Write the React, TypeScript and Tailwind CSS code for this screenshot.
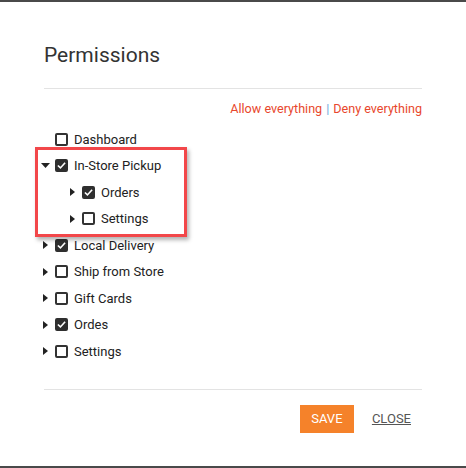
import React from "react";

type Node = { label: string; checked: boolean; arrow: "none" | "right" | "down"; children?: Node[] };

const tree: Node[] = [
  { label: "Dashboard", checked: false, arrow: "none" },
  {
    label: "In-Store Pickup",
    checked: true,
    arrow: "down",
    children: [
      { label: "Orders", checked: true, arrow: "right" },
      { label: "Settings", checked: false, arrow: "right" },
    ],
  },
  { label: "Local Delivery", checked: true, arrow: "right" },
  { label: "Ship from Store", checked: false, arrow: "right" },
  { label: "Gift Cards", checked: false, arrow: "right" },
  { label: "Ordes", checked: true, arrow: "right" },
  { label: "Settings", checked: false, arrow: "right" },
];

function Arrow({ dir }: { dir: "none" | "right" | "down" }) {
  return (
    <span className="w-[11px] mr-[4px] h-[13px] flex items-center justify-center">
      {dir === "right" && (
        <svg width="5" height="8" viewBox="0 0 5 8">
          <path d="M0 0 L5 4 L0 8 Z" fill="#222" />
        </svg>
      )}
      {dir === "down" && (
        <svg width="9" height="5" viewBox="0 0 9 5">
          <path d="M0 0 L9 0 L4.5 5 Z" fill="#222" />
        </svg>
      )}
    </span>
  );
}

function Box({ checked }: { checked: boolean }) {
  return (
    <span
      className={
        checked
          ? "w-[13px] h-[13px] rounded-[2px] bg-[#2f2f2f] border-2 border-[#2f2f2f] flex items-center justify-center"
          : "w-[13px] h-[13px] rounded-[2px] bg-white border-2 border-[#333] flex items-center justify-center"
      }
    >
      {checked && (
        <svg width="10" height="9" viewBox="0 0 10 9">
          <path d="M1 4.5 L3.8 7.2 L9 1.4" stroke="#fff" strokeWidth="1.8" fill="none" />
        </svg>
      )}
    </span>
  );
}

function Row({ node, indent }: { node: Node; indent: number }) {
  return (
    <>
      <div className="h-[26.5px] flex items-center" style={{ paddingLeft: indent }}>
        <Arrow dir={node.arrow} />
        <Box checked={node.checked} />
        <span className="ml-[6px] text-[13px] text-[#222]">{node.label}</span>
      </div>
      {node.children?.map((c, i) => (
        <Row key={i} node={c} indent={indent + 27} />
      ))}
    </>
  );
}

export default function App() {
  return (
    <div
      className="w-[466px] h-[468px] bg-white border-t-2 border-b-2 border-[#4a4a4a] relative overflow-hidden"
      style={{ fontFamily: "Roboto, 'Liberation Sans', Arial, sans-serif" }}
    >
      <div className="px-[44px] pt-[40px]">
        <h1 className="text-[21px] leading-[26px] text-[#333] font-normal">Permissions</h1>
        <div className="mt-[20px] h-px bg-[#e3e3e3]" />
        <div className="mt-[10px] flex justify-end text-[12.6px] leading-[20px]">
          <span className="text-[#e8472d]">Allow everything</span>
          <span className="text-[#6fa8dc] mx-[4px]">|</span>
          <span className="text-[#e8472d]">Deny everything</span>
        </div>
        <div className="mt-[7px] ml-[-4px]">
          {tree.map((n, i) => (
            <Row key={i} node={n} indent={0} />
          ))}
        </div>
        <div className="mt-[24px] h-px bg-[#e3e3e3]" />
        <div className="mt-[15px] flex justify-end items-center">
          <button className="h-[28px] w-[54px] bg-[#f5822a] text-white text-[13px] uppercase">SAVE</button>
          <span className="ml-[18px] mr-[11px] text-[13px] text-[#555] underline">CLOSE</span>
        </div>
      </div>
      <div className="absolute left-[35px] top-[145px] w-[152px] h-[90px] border-[3px] border-[#f2474a] shadow-[2px_3px_4px_rgba(0,0,0,0.3)]" />
    </div>
  );
}
